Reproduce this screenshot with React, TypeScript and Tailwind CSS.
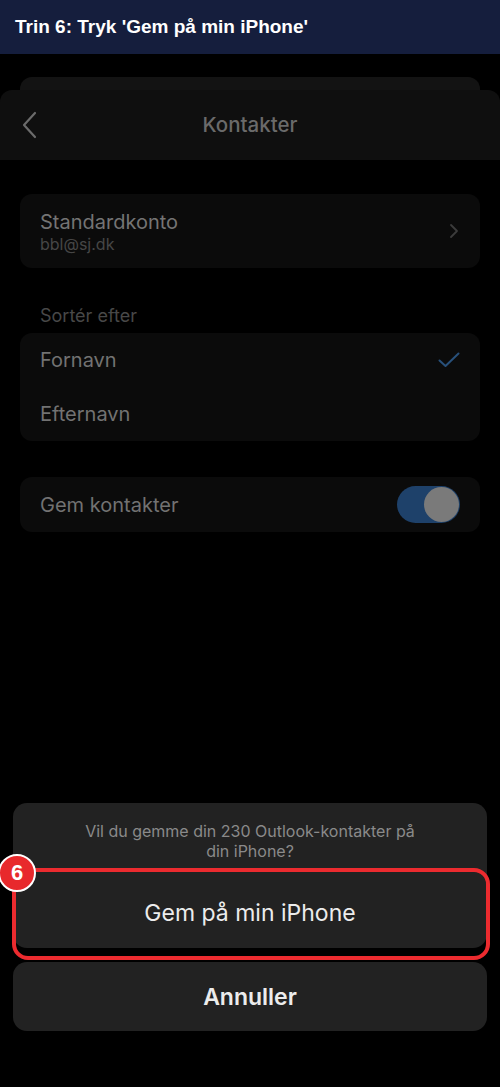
export default function App() {
  return (
    <div className="relative flex h-[1087px] w-[500px] flex-col overflow-hidden bg-black font-['Inter','Noto_Sans',sans-serif]">
      {/* step banner */}
      <div className="flex h-[54px] shrink-0 items-center bg-[#151e3d] px-[15px]">
        <h1 className="font-['Liberation_Sans',Arial,sans-serif] text-[19px] font-bold text-white">
          Trin 6: Tryk 'Gem på min iPhone'
        </h1>
      </div>

      {/* stacked sheets */}
      <div className="mx-[20px] mt-[23px] h-[13px] shrink-0 rounded-t-[12px] bg-[#131313]" />
      <div className="relative flex h-[70px] shrink-0 items-center justify-center rounded-t-[12px] bg-[#0f0f0f]">
        <svg className="absolute left-[21px] top-[21px]" width="18" height="28" viewBox="0 0 18 28" fill="none">
          <path d="M14 2 L3 14 L14 26" stroke="#6b6b6b" strokeWidth="2.2" strokeLinecap="round" strokeLinejoin="round" />
        </svg>
        <span className="text-[20.5px] font-medium text-[#6a6a6a]">Kontakter</span>
      </div>

      <div className="mx-[20px] mt-[34px] flex h-[74px] shrink-0 items-center justify-between rounded-[12px] bg-[#0b0b0b] px-[20px]">
        <div className="flex flex-col">
          <span className="text-[20px] leading-[24px] text-[#747474]">Standardkonto</span>
          <span className="mt-[1px] text-[16px] leading-[18px] text-[#464646]">bbl@sj.dk</span>
        </div>
        <svg width="10" height="16" viewBox="0 0 10 16" fill="none" className="mr-[1px]">
          <path d="M2 2 L8 8 L2 14" stroke="#3c3c3c" strokeWidth="1.8" strokeLinecap="round" strokeLinejoin="round" />
        </svg>
      </div>

      <div className="mt-[35px] h-[25px] shrink-0 px-[40px] text-[18px] leading-[25px] text-[#484848]">Sortér efter</div>

      <div className="mx-[20px] mt-[5px] flex shrink-0 flex-col rounded-[12px] bg-[#0b0b0b] px-[20px]">
        <div className="flex h-[54px] items-center justify-between">
          <span className="text-[20px] text-[#727272]">Fornavn</span>
          <svg width="22" height="16" viewBox="0 0 22 16" fill="none">
            <path d="M1.5 8.5 L7.5 14 L20.5 1.5" stroke="#28507a" strokeWidth="2" strokeLinecap="round" strokeLinejoin="round" />
          </svg>
        </div>
        <div className="flex h-[54px] items-center">
          <span className="text-[20px] text-[#727272]">Efternavn</span>
        </div>
      </div>

      <div className="mx-[20px] mt-[36px] flex h-[55px] shrink-0 items-center justify-between rounded-[12px] bg-[#0b0b0b] pl-[20px] pr-[20px]">
        <span className="text-[20px] text-[#727272]">Gem kontakter</span>
        <div className="flex h-[37px] w-[63px] items-center justify-end rounded-full bg-[#1e416a] pr-[1px]">
          <div className="h-[35px] w-[35px] rounded-full bg-[#7a7a7a]" />
        </div>
      </div>

      {/* action sheet */}
      <div className="mx-[13px] mt-[271px] flex h-[145px] shrink-0 flex-col rounded-[14px] bg-[#222222]">
        <p className="px-[68px] pt-[18px] text-center text-[16px] leading-[20px] text-[#8a8a8a]">
          Vil du gemme din 230 Outlook-kontakter på din iPhone?
        </p>
        <div className="mt-auto flex h-[78px] items-center justify-center pt-[8px]">
          <span className="text-[23px] text-[#ececec]">Gem på min iPhone</span>
        </div>
      </div>
      <div className="mx-[13px] mt-[14px] flex h-[69px] shrink-0 items-center justify-center rounded-[14px] bg-[#222222] pt-[2px]">
        <span className="text-[23px] font-semibold text-[#ececec]">Annuller</span>
      </div>

      {/* annotation overlay */}
      <div className="absolute left-[12px] top-[868px] h-[92px] w-[478px] rounded-[16px] border-[4px] border-[#ec2b2f]" />
      <div className="absolute left-[-2px] top-[854px] flex h-[38px] w-[38px] items-center justify-center rounded-full border-[2px] border-white bg-[#e8292c]">
        <span className="font-['Liberation_Sans',Arial,sans-serif] text-[22px] font-bold leading-none text-white">6</span>
      </div>
    </div>
  )
}
